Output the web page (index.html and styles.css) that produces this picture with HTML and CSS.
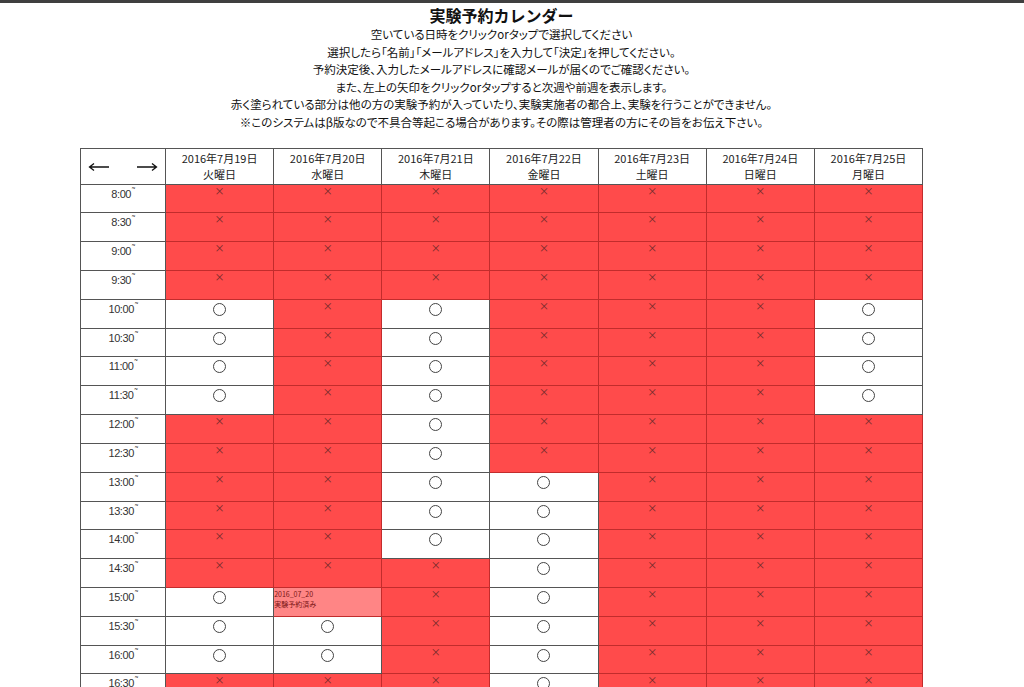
FILE: index.html
```html
<!DOCTYPE html>
<html lang="ja">
<head>
<meta charset="utf-8">
<title>実験予約カレンダー</title>
<link rel="stylesheet" href="styles.css">
</head>
<body>
<div class="topbar"></div>
<div class="page">
  <h1 class="title">実験予約カレンダー</h1>
  <p class="intro">空いている日時をクリックorタップで選択してください<br>選択したら「名前」「メールアドレス」を入力して「決定」を押してください。<br>予約決定後、入力したメールアドレスに確認メールが届くのでご確認ください。<br>また、左上の矢印をクリックorタップすると次週や前週を表示します。<br>赤く塗られている部分は他の方の実験予約が入っていたり、実験実施者の都合上、実験を行うことができません。<br>※このシステムはβ版なので不具合等起こる場合があります。その際は管理者の方にその旨をお伝え下さい。</p>
  <table class="cal">
    <colgroup><col class="c-time"><col><col><col><col><col><col><col></colgroup>
    <thead>
      <tr class="head">
        <th class="nav"><span class="arrows"><svg width="22" height="10" viewBox="0 0 22 10"><path d="M21 5H2M6 1.5L1.5 5 6 8.5" fill="none" stroke="#111" stroke-width="1.3"/></svg><svg width="22" height="10" viewBox="0 0 22 10"><path d="M1 5h19M16 1.5L20.5 5 16 8.5" fill="none" stroke="#111" stroke-width="1.3"/></svg></span></th>
        <th>2016年7月19日<br>火曜日</th>
        <th>2016年7月20日<br>水曜日</th>
        <th>2016年7月21日<br>木曜日</th>
        <th>2016年7月22日<br>金曜日</th>
        <th>2016年7月23日<br>土曜日</th>
        <th>2016年7月24日<br>日曜日</th>
        <th>2016年7月25日<br>月曜日</th>
      </tr>
    </thead>
    <tbody>
      <tr><td class="time">8:00<span class="tl">˜</span></td><td class="x"><span class="mx">×</span></td><td class="x"><span class="mx">×</span></td><td class="x"><span class="mx">×</span></td><td class="x"><span class="mx">×</span></td><td class="x"><span class="mx">×</span></td><td class="x"><span class="mx">×</span></td><td class="x"><span class="mx">×</span></td></tr>
      <tr><td class="time">8:30<span class="tl">˜</span></td><td class="x"><span class="mx">×</span></td><td class="x"><span class="mx">×</span></td><td class="x"><span class="mx">×</span></td><td class="x"><span class="mx">×</span></td><td class="x"><span class="mx">×</span></td><td class="x"><span class="mx">×</span></td><td class="x"><span class="mx">×</span></td></tr>
      <tr><td class="time">9:00<span class="tl">˜</span></td><td class="x"><span class="mx">×</span></td><td class="x"><span class="mx">×</span></td><td class="x"><span class="mx">×</span></td><td class="x"><span class="mx">×</span></td><td class="x"><span class="mx">×</span></td><td class="x"><span class="mx">×</span></td><td class="x"><span class="mx">×</span></td></tr>
      <tr><td class="time">9:30<span class="tl">˜</span></td><td class="x"><span class="mx">×</span></td><td class="x"><span class="mx">×</span></td><td class="x"><span class="mx">×</span></td><td class="x"><span class="mx">×</span></td><td class="x"><span class="mx">×</span></td><td class="x"><span class="mx">×</span></td><td class="x"><span class="mx">×</span></td></tr>
      <tr><td class="time">10:00<span class="tl">˜</span></td><td class="o"><span class="mo"></span></td><td class="x"><span class="mx">×</span></td><td class="o"><span class="mo"></span></td><td class="x"><span class="mx">×</span></td><td class="x"><span class="mx">×</span></td><td class="x"><span class="mx">×</span></td><td class="o"><span class="mo"></span></td></tr>
      <tr><td class="time">10:30<span class="tl">˜</span></td><td class="o"><span class="mo"></span></td><td class="x"><span class="mx">×</span></td><td class="o"><span class="mo"></span></td><td class="x"><span class="mx">×</span></td><td class="x"><span class="mx">×</span></td><td class="x"><span class="mx">×</span></td><td class="o"><span class="mo"></span></td></tr>
      <tr><td class="time">11:00<span class="tl">˜</span></td><td class="o"><span class="mo"></span></td><td class="x"><span class="mx">×</span></td><td class="o"><span class="mo"></span></td><td class="x"><span class="mx">×</span></td><td class="x"><span class="mx">×</span></td><td class="x"><span class="mx">×</span></td><td class="o"><span class="mo"></span></td></tr>
      <tr><td class="time">11:30<span class="tl">˜</span></td><td class="o"><span class="mo"></span></td><td class="x"><span class="mx">×</span></td><td class="o"><span class="mo"></span></td><td class="x"><span class="mx">×</span></td><td class="x"><span class="mx">×</span></td><td class="x"><span class="mx">×</span></td><td class="o"><span class="mo"></span></td></tr>
      <tr><td class="time">12:00<span class="tl">˜</span></td><td class="x"><span class="mx">×</span></td><td class="x"><span class="mx">×</span></td><td class="o"><span class="mo"></span></td><td class="x"><span class="mx">×</span></td><td class="x"><span class="mx">×</span></td><td class="x"><span class="mx">×</span></td><td class="x"><span class="mx">×</span></td></tr>
      <tr><td class="time">12:30<span class="tl">˜</span></td><td class="x"><span class="mx">×</span></td><td class="x"><span class="mx">×</span></td><td class="o"><span class="mo"></span></td><td class="x"><span class="mx">×</span></td><td class="x"><span class="mx">×</span></td><td class="x"><span class="mx">×</span></td><td class="x"><span class="mx">×</span></td></tr>
      <tr><td class="time">13:00<span class="tl">˜</span></td><td class="x"><span class="mx">×</span></td><td class="x"><span class="mx">×</span></td><td class="o"><span class="mo"></span></td><td class="o"><span class="mo"></span></td><td class="x"><span class="mx">×</span></td><td class="x"><span class="mx">×</span></td><td class="x"><span class="mx">×</span></td></tr>
      <tr><td class="time">13:30<span class="tl">˜</span></td><td class="x"><span class="mx">×</span></td><td class="x"><span class="mx">×</span></td><td class="o"><span class="mo"></span></td><td class="o"><span class="mo"></span></td><td class="x"><span class="mx">×</span></td><td class="x"><span class="mx">×</span></td><td class="x"><span class="mx">×</span></td></tr>
      <tr><td class="time">14:00<span class="tl">˜</span></td><td class="x"><span class="mx">×</span></td><td class="x"><span class="mx">×</span></td><td class="o"><span class="mo"></span></td><td class="o"><span class="mo"></span></td><td class="x"><span class="mx">×</span></td><td class="x"><span class="mx">×</span></td><td class="x"><span class="mx">×</span></td></tr>
      <tr><td class="time">14:30<span class="tl">˜</span></td><td class="x"><span class="mx">×</span></td><td class="x"><span class="mx">×</span></td><td class="x"><span class="mx">×</span></td><td class="o"><span class="mo"></span></td><td class="x"><span class="mx">×</span></td><td class="x"><span class="mx">×</span></td><td class="x"><span class="mx">×</span></td></tr>
      <tr><td class="time">15:00<span class="tl">˜</span></td><td class="o"><span class="mo"></span></td><td class="rsv"><span class="rsv-text">2016_07_20<br>実験予約済み</span></td><td class="x"><span class="mx">×</span></td><td class="o"><span class="mo"></span></td><td class="x"><span class="mx">×</span></td><td class="x"><span class="mx">×</span></td><td class="x"><span class="mx">×</span></td></tr>
      <tr><td class="time">15:30<span class="tl">˜</span></td><td class="o"><span class="mo"></span></td><td class="o"><span class="mo"></span></td><td class="x"><span class="mx">×</span></td><td class="o"><span class="mo"></span></td><td class="x"><span class="mx">×</span></td><td class="x"><span class="mx">×</span></td><td class="x"><span class="mx">×</span></td></tr>
      <tr><td class="time">16:00<span class="tl">˜</span></td><td class="o"><span class="mo"></span></td><td class="o"><span class="mo"></span></td><td class="x"><span class="mx">×</span></td><td class="o"><span class="mo"></span></td><td class="x"><span class="mx">×</span></td><td class="x"><span class="mx">×</span></td><td class="x"><span class="mx">×</span></td></tr>
      <tr><td class="time">16:30<span class="tl">˜</span></td><td class="x"><span class="mx">×</span></td><td class="x"><span class="mx">×</span></td><td class="x"><span class="mx">×</span></td><td class="o"><span class="mo"></span></td><td class="x"><span class="mx">×</span></td><td class="x"><span class="mx">×</span></td><td class="x"><span class="mx">×</span></td></tr>
    </tbody>
  </table>
</div>
</body>
</html>
```

FILE: styles.css
```css
html, body {
  margin: 0;
  padding: 0;
  background: #fff;
}
body {
  font-family: "Noto Sans CJK JP", "Noto Sans", sans-serif;
  color: #111;
}
.topbar {
  height: 3px;
  background: #3f3f3f;
}
.page {
  width: 1003px;
  text-align: center;
}
.title {
  margin: 2px 0 1px;
  font-size: 16px;
  line-height: 20px;
  font-weight: bold;
}
.intro {
  margin: 0 0 16px;
  font-size: 11.5px;
  line-height: 17.6px;
  font-feature-settings: "palt";
}
.cal {
  margin: 0 auto;
  width: 843px;
  table-layout: fixed;
  border-collapse: collapse;
  font-size: 11px;
}
.c-time {
  width: 85px;
}
.cal th, .cal td {
  border: 1px solid #555;
  padding: 0;
  text-align: center;
  vertical-align: top;
}
.head {
  height: 36px;
}
.head th {
  font-weight: normal;
  line-height: 16.5px;
  vertical-align: middle;
  color: #222;
}
.cal th.nav {
  vertical-align: middle;
}
.arrows {
  display: flex;
  justify-content: space-between;
  padding: 2px 7px 0 7px;
}
.cal tbody tr {
  height: 28.82px;
}
.time {
  font-family: "Liberation Sans", sans-serif;
  font-size: 11px;
  line-height: 14px;
  padding-top: 2px !important;
  color: #333;
  letter-spacing: -0.4px;
}
.tl {
  position: relative;
  top: -4px;
  font-size: 9px;
  margin-left: 1px;
}
.cal td.x {
  background: #ff4b4b;
  border-color: #c22c2c;
}
.cal td.o {
  background: #fff;
}
.cal td.rsv {
  background: #ff8585;
  border-color: #c22c2c;
  text-align: left;
}
.mx {
  display: block;
  font-size: 10px;
  line-height: 12px;
  color: #6e2a2a;
}
.mo {
  display: inline-block;
  width: 11px;
  height: 11px;
  margin-top: 3px;
  border: 1px solid #444;
  border-radius: 50%;
}
.rsv-text {
  display: block;
  padding-top: 1px;
  font-size: 7px;
  line-height: 10px;
  color: #7a1414;
}
```
